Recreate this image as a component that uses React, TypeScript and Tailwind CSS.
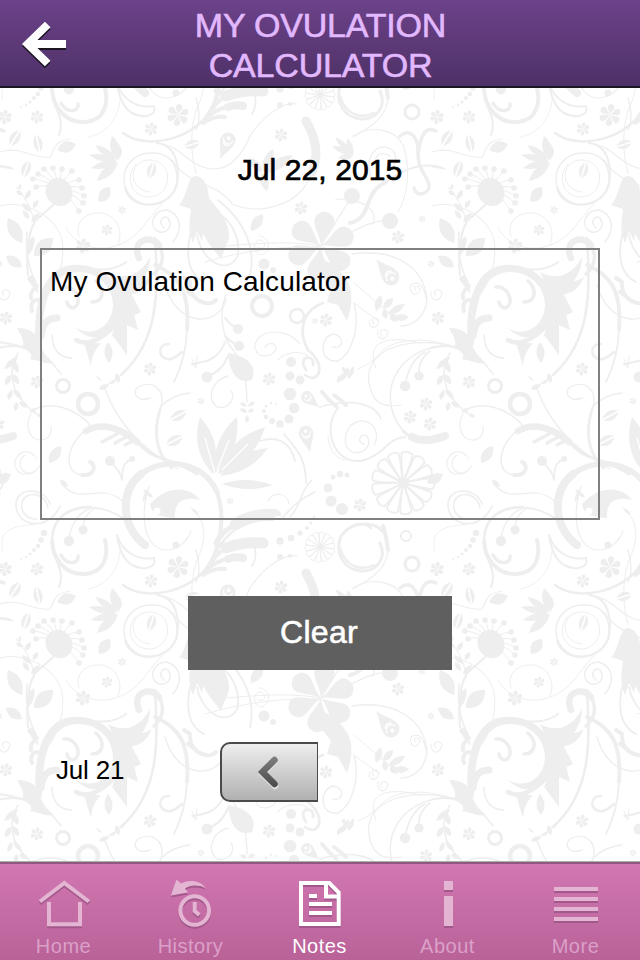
import type { ReactNode } from 'react';

const TILE_W = 432;
const TILE_H = 452;

type Point = [number, number];

// [cx, cy, radius]
const BLOSSOMS: [number, number, number][] = [
    [5, 117, 7], [37, 117, 6.5], [151, 129, 6.5], [178, 115, 11], [281, 135, 6.5],
    [301, 208, 6.5], [107, 230, 5.5], [122, 210, 4], [398, 237, 6.5], [422, 219, 3.5],
    [83, 246, 7.5], [6, 318, 6.5], [37, 382, 6.5], [150, 369, 6.5], [201, 401, 3.5],
    [269, 379, 6.5], [326, 320, 6.5], [315, 321, 3], [426, 404, 6.5], [410, 417, 6.5],
    [430, 424, 6.5], [431, 264, 3.5], [360, 505, 6.5], [230, 501, 3.5],
];

// [cx, cy, radius, stroke width]
const RINGS: [number, number, number, number][] = [
    [412, 112, 7, 3], [406, 536, 5, 2], [262, 306, 10, 4], [297, 316, 7, 2.5],
    [63, 386, 6.5, 3], [88, 404, 10, 4.5],
];

// [x1, y1, x2, y2, width]
const LEAVES: [number, number, number, number, number][] = [
    [57, 150, 76, 144, 11], [99, 202, 110, 187, 11], [8, 218, 22, 243, 13], [34, 256, 53, 238, 14],
    [6, 256, 22, 267, 10], [251, 231, 263, 214, 10], [49, 463, 61, 446, 10], [-5, 483, 11, 474, 10],
    [222, 484, 273, 485, 9], [108, 342, 109, 363, 8],
    // small lotus heads
    [118, 160, 112, 136, 9], [118, 160, 119, 144, 7], [117, 160, 95, 145, 7], [117, 161, 89, 155, 7],
    [117, 162, 91, 168, 7], [118, 162, 97, 181, 9],
    [353, 155, 335, 137, 6], [353, 155, 332, 146, 6], [353, 156, 338, 158, 6], [353, 156, 347, 138, 6],
    // large lotus
    [213, 474, 200, 417, 17], [215, 473, 237, 417, 16], [218, 474, 265, 427, 18], [220, 476, 268, 448, 13],
    // lotus beside the date
    [262, 172, 250, 158, 8], [263, 172, 273, 149, 9], [264, 173, 293, 155, 10], [262, 173, 267, 191, 8],
    // hanging sprigs
    [18, 357, 4, 369, 6], [13, 360, 18, 373, 6], [11, 375, 5, 385, 6], [12, 374, 19, 384, 6],
    [12, 390, 8, 400, 5], [13, 389, 22, 399, 5], [17, 402, 15, 411, 5], [19, 402, 28, 407, 5],
    [31, 412, 37, 408, 4], [37, 414, 43, 417, 4],
    [376, 311, 381, 295, 7], [383, 309, 393, 298, 7], [388, 314, 405, 304, 7], [393, 318, 409, 317, 7],
    [390, 313, 397, 322, 7], [384, 309, 386, 319, 6],
    [337, 383, 343, 374, 5], [342, 381, 349, 367, 5], [348, 379, 354, 366, 5], [346, 372, 342, 367, 4],
    [22, 203, 31, 212, 5], [25, 199, 31, 190, 5], [33, 208, 38, 200, 5], [29, 219, 23, 210, 5],
    [31, 222, 40, 213, 5], [23, 195, 16, 191, 4], [20, 190, 20, 184, 3],
    [240, 403, 247, 406, 4], [248, 406, 255, 402, 4], [240, 409, 247, 412, 4], [248, 412, 254, 409, 4],
    [247, 415, 247, 423, 4],
    // paired twig leaves
    [99, 389, 109, 385, 5], [116, 373, 119, 383, 5], [96, 376, 102, 381, 2], [110, 384, 116, 380, 3],
    [60, 480, 68, 487, 5], [143, 489, 153, 498, 4], [143, 502, 147, 490, 3], [191, 508, 199, 515, 3],
];

// leaves with a light vein: [x1, y1, x2, y2, width]
const SPLIT_LEAVES: [number, number, number, number, number][] = [
    [10, 146, 20, 130, 10], [36, 134, 40, 153, 9], [23, 178, 29, 160, 9], [149, 179, 154, 162, 9],
    [184, 147, 200, 142, 9], [170, 420, 187, 411, 10], [166, 445, 183, 436, 10],
];

const DOTS: [number, number, number][] = [
    // seed trails
    [44, 533, 3.3], [41, 540, 2.8], [38, 546, 2.3], [34, 550, 2], [30, 554, 1.6], [26, 557, 1.2], [21, 559, 0.9],
    [280, 541, 3.7], [291, 538, 3.2], [300, 533, 2.6], [307, 528, 2.1], [311, 523, 1.6], [314, 517, 1.2],
    [290, 394, 6.3], [294, 408, 5.2], [289, 419, 4.6], [280, 424, 3.8], [272, 421, 3], [266, 417, 2.4],
    [264, 411, 2], [266, 406, 1.5], [271, 403, 1.2], [276, 404, 1],
    [328, 488, 4.5], [331, 501, 5.5], [342, 509, 6], [333, 477, 2.5], [340, 474, 3.2], [347, 475, 2.5],
    [352, 196, 8], [390, 221, 8], [176, 545, 3.5],
    // drops at the end of stems
    [69, 541, 5.2], [83, 530, 4.6], [405, 386, 5.2], [419, 376, 4.6], [207, 377, 5.5], [238, 329, 5], [239, 346, 5],
    [110, 461, 5], [132, 459, 3], [291, 362, 5], [290, 376, 4.5], [300, 380, 4.5], [264, 264, 5.5], [273, 270, 3],
    [280, 557, 3], [290, 556, 2],
];

// pin heads fanned around the seed pod
const PINS: Point[] = [
    [36, 187], [38, 174], [44, 169], [53, 168], [62, 169], [72, 171],
    [79, 180], [82, 188], [84, 196], [83, 203], [79, 211], [33, 179],
];

// [path, stroke width]
const STROKES: [string, number][] = [
    // scroll behind the header edge
    ['M105 540C109 556 104 573 85 574C66 575 53 560 52 541', 4],
    ['M52 541C52 518 68 507 90 507', 2.5],
    ['M54 530C58 508 95 498 124 519', 1.8],
    ['M78 556C79 565 66 565 61 555', 3.5],
    ['M69 541C70 525 78 512 92 508M83 530C83 520 87 512 96 508', 1.3],
    ['M52 548C55 562 65 570 59 587', 2],
    ['M117 535C122 552 138 561 154 558C157 566 147 572 132 565C124 560 119 550 117 535', 2],
    ['M120 552C118 572 106 585 89 589', 0.9],
    // wide crescent
    ['M145 545C120 526 120 490 141 474', 8],
    ['M141 474C165 456 204 462 217 492', 5.5],
    ['M217 492C224 512 222 535 214 556', 4],
    ['M149 486C140 515 143 547 165 550C178 550 187 542 191 531', 1.2],
    ['M191 508C205 520 208 535 198 558C190 575 190 605 196 625', 1],
    ['M196 550C200 565 200 575 196 582', 1.4],
    ['M62 484C75 500 88 492 104 493C114 494 120 498 124 503', 1.2],
    // fan of rounded fronds
    ['M123 585C145 602 190 592 208 566C218 545 230 530 250 520', 2.5],
    ['M205 572C213 557 222 547 236 544', 4],
    ['M226 548C238 543 250 542 263 543', 11],
    ['M208 568C218 561 226 558 234 558', 4],
    ['M228 559C234 557 239 557 243 558', 8],
    ['M203 575C212 569 218 568 225 569', 4],
    ['M216 543C222 531 232 525 245 521', 5],
    ['M236 524C247 517 260 514 275 515', 12],
    ['M282 518C290 510 297 500 315 492M290 517C302 505 300 490 312 480', 1.6],
    ['M268 501C274 490 288 493 289 504', 1.2],
    ['M252 538C257 550 256 560 252 566', 1.8],
    ['M297 556C282 553 262 570 250 588C240 612 225 628 200 618C185 612 180 598 157 595', 1.2],
    ['M157 143C176 145 180 165 177 185C168 212 130 210 125 188', 2],
    ['M172 160C190 188 215 180 232 204C260 216 300 205 310 176', 1.3],
    ['M306 121C316 138 319 156 312 172', 9],
    // left waves
    ['M2 552V540C4 528 16 526 45 523', 0.9],
    ['M0 152C20 145 35 160 50 157C55 150 52 142 70 139M0 167L14 169', 1.1],
    ['M16 187C28 200 34 215 34 226M0 206C25 200 55 215 62 240C65 262 58 280 50 292', 1.1],
    ['M59 200L35 221C28 233 26 250 28 275', 2.2],
    // spirals
    ['M177 178C177 160 165 152 151 153C134 153 123 166 124 181C126 197 139 206 153 204C168 202 177 192 177 178', 1.5],
    ['M136 164C124 178 132 197 149 197C164 197 172 181 165 168C159 159 145 157 137 165C128 177 136 191 150 192', 1],
    ['M79 236C74 218 90 212 101 213C116 215 124 230 118 244M162 204C145 220 140 240 112 247C95 251 75 245 66 228', 1],
    ['M164 228C158 223 162 214 168 218C174 228 165 235 157 231C148 224 154 210 167 210C184 216 181 232 173 242', 1.5],
    ['M50 504C45 487 16 486 16 505C17 529 50 530 60 506M48 508C46 492 25 490 22 503C20 516 32 520 37 519', 1.6],
    ['M37 459C30 446 13 452 15 466C17 477 35 477 39 466M35 471C25 479 13 464 25 455', 1.1],
    // wreath and curls right of the date
    ['M382 531C375 522 352 520 341 536C334 553 344 569 360 571C377 572 387 558 380 543', 3],
    ['M345 532C354 522 364 522 371 528M340 548C346 568 362 571 374 565', 2.5],
    ['M383 526C385 532 387 540 388 550', 4],
    ['M388 550C387 568 371 580 353 588', 1.2],
    ['M353 137C370 124 395 129 403 145C411 168 408 195 398 212', 1.1],
    ['M400 136C410 127 419 138 418 154C420 139 424 125 436 131', 3.5],
    ['M414 188C416 198 430 194 429 185C427 175 418 170 418 154', 3.5],
    ['M350 223C373 218 362 193 386 182', 4],
    ['M386 182C405 168 425 162 443 168', 2],
    ['M321 246L352 196M321 246C350 235 370 218 390 221M335 200C350 196 380 205 373 224', 1.2],
    ['M371 176C365 158 374 146 386 147C402 152 395 170 388 170M378 169C370 158 380 149 390 156', 1.3],
    // long tail under the bird
    ['M218 200C246 222 256 250 250 275M190 235C185 260 190 275 204 282M197 235C203 265 230 275 238 255C240 235 230 220 217 212', 1.8],
    ['M321 246C285 240 255 244 225 246M321 248C290 245 245 250 205 262', 1],
    ['M257 247C264 252 268 243 261 240C252 240 253 253 261 255C274 251 268 235 259 236', 1],
    // acanthus scroll
    ['M27 232C25 255 29 268 37 286', 1.6],
    ['M53 279C72 259 105 279 126 262', 2],
    ['M67 302C69 311 79 309 78 299C77 291 70 286 64 287M92 302C103 302 106 290 96 281', 3.6],
    ['M76 340C89 348 105 336 115 325', 4.5],
    ['M41 336C43 322 48 318 57 318', 7],
    ['M52 335C52 350 60 358 72 358M48 358L61 374', 1.5],
    ['M0 347C18 344 30 349 40 351', 1.6],
    ['M37 286C32 290 30 294 31 298M38 300C32 300 30 305 32 311', 4],
    ['M155 238C158 290 160 340 121 375', 2.6],
    ['M121 375L107 385', 1],
    ['M155 265C178 275 190 290 187 330', 3.8],
    ['M187 330C186 355 180 370 174 382', 1.8],
    ['M139 258C131 240 151 234 159 245', 6.5],
    ['M159 245C166 257 161 268 154 274', 3.5],
    ['M169 344C157 343 157 361 171 359C176 357 180 354 182 352', 2.5],
    ['M165 285C177 328 218 327 226 300', 1.3],
    ['M190 285C190 300 208 308 216 300M188 292L196 298M190 282L184 278', 4],
    ['M226 295C219 312 222 330 228 343C238 358 246 360 247 402', 1.4],
    ['M225 318C230 324 234 327 238 329M225 336C230 341 234 344 239 346M225 342C218 360 206 362 192 364M228 356C222 370 214 374 207 377', 2],
    ['M192 359L195 367M197 356L196 368', 1],
    ['M228 376C212 380 206 398 217 407C230 410 236 397 231 391', 1.3],
    // lower left vine
    ['M18 353C8 368 8 395 38 415M30 412C50 399 76 408 92 427', 1.5],
    ['M31 414C24 426 30 441 42 440C53 438 52 427 50 426', 1.3],
    ['M105 389C115 415 133 445 178 469', 1.4],
    ['M86 431C101 422 120 427 137 442', 6.5],
    ['M102 442L117 434M115 443L126 437M125 445L133 441', 3.5],
    ['M137 441C154 463 175 458 197 474', 3.2],
    ['M87 429C64 447 64 474 82 475', 1.4],
    ['M82 475C96 476 96 464 90 462', 4],
    ['M150 398C138 403 131 393 138 387C153 379 167 390 160 410M160 407C170 397 180 394 190 393', 1.4],
    ['M160 410C152 435 158 456 172 468', 2.8],
    ['M110 461C116 468 120 470 122 480M132 459C124 462 122 468 122 480', 1.8],
    // center curls
    ['M255 349C253 330 285 325 300 344M256 350C258 359 274 357 276 349C276 341 266 343 265 348', 1.2],
    ['M323 303C303 310 297 330 308 350C328 366 318 385 305 375M306 370C296 354 316 355 313 365', 2.8],
    ['M278 360C285 352 300 350 308 356', 1.2],
    ['M260 441C275 436 290 440 295 461M284 434C298 450 306 460 306 483', 1.8],
    // loops right of center
    ['M352 254C390 248 424 264 427 300C425 318 412 326 401 326', 1.4],
    ['M416 290C411 286 418 284 420 289C418 298 408 294 411 285C421 278 425 292 426 298M436 296C431 290 440 287 442 293C440 304 430 301 431 292', 1.1],
    ['M354 283L388 312M354 303L377 320', 1],
    ['M374 324C369 319 376 315 379 321C377 332 366 326 370 320M382 336C377 330 386 327 388 333C385 343 376 339 378 330', 1.1],
    ['M354 303C361 330 350 355 338 361C320 364 318 338 333 334C346 336 343 350 333 347', 1.4],
    ['M358 369C390 355 374 342 420 340C435 341 445 344 460 348M376 368C364 340 390 335 420 343', 1],
    ['M462 350C420 333 358 345 370 388C374 402 382 408 401 405', 1.2],
    ['M462 348C405 336 370 390 403 431', 1.5],
    ['M403 431C415 443 430 440 445 437', 3],
    ['M412 437C424 443 435 439 445 436', 8],
    ['M405 386C407 370 415 357 425 352M419 376C418 366 422 357 430 351', 1.6],
    ['M322 392C326 397 330 402 336 406M334 395C338 398 342 401 346 405', 4],
    ['M320 407C350 398 375 403 381 419', 1.7],
    ['M338 408C322 428 333 463 360 461C385 456 386 438 405 437', 2],
    ['M364 444C356 443 360 432 367 436C373 447 362 455 352 452C340 445 345 425 359 421C375 420 380 435 374 445', 1.3],
    ['M328 436C328 445 333 458 345 460', 1],
];

const leafPath = (x1: number, y1: number, x2: number, y2: number, w: number) => {
    const len = Math.hypot(x2 - x1, y2 - y1) || 1;
    const nx = (-(y2 - y1) / len) * w;
    const ny = ((x2 - x1) / len) * w;
    const mx = (x1 + x2) / 2;
    const my = (y1 + y2) / 2;
    return `M${x1} ${y1}Q${mx + nx} ${my + ny} ${x2} ${y2}Q${mx - nx} ${my - ny} ${x1} ${y1}Z`;
};

const Petals = ({ cx, cy, r, count, outline = false }: { cx: number; cy: number; r: number; count: number; outline?: boolean }) => (
    <g
        transform={`translate(${cx} ${cy})`}
        fill={outline ? 'none' : '#eeeeee'}
        stroke={outline ? '#eeeeee' : 'none'}
        strokeWidth={r * 0.06}
    >
        {Array.from({ length: count }, (_, i) => (
            <path
                key={i}
                d={`M0 0C${r * 0.08} ${-r * 0.4} ${r * (outline ? 0.18 : 0.5)} ${-r * 0.7} ${r * 0.18} ${-r * 0.95}Q0 ${-r * 1.08} ${-r * 0.18} ${-r * 0.95}C${-r * (outline ? 0.18 : 0.5)} ${-r * 0.7} ${-r * 0.08} ${-r * 0.4} 0 0Z`}
                transform={`rotate(${(360 / count) * i + 8})`}
            />
        ))}
    </g>
);

const EyeDrop = ({ x, y, angle, size }: { x: number; y: number; angle: number; size: number }) => (
    <g transform={`translate(${x} ${y}) rotate(${angle}) scale(${size})`}>
        <path d="M0 22C-3 12 -8 7 -8 0A8 8 0 0 1 8 0C8 7 3 12 0 22Z" fill="#eeeeee" />
        <path d="M-5 -1A5 5 0 0 0 5 -1M-4 4Q0 8 4 4" fill="none" stroke="#ffffff" strokeWidth="1.3" />
        <circle cy="-2" r="2" fill="#ffffff" />
    </g>
);

const FloralTile = () => (
    <g id="floral" fill="#eeeeee">
        <g fill="none" stroke="#eeeeee" strokeLinecap="round" strokeLinejoin="round">
            {STROKES.map(([d, w]) => <path key={d} d={d} strokeWidth={w} />)}
            {RINGS.map(([cx, cy, r, w]) => <circle key={`${cx}-${cy}`} cx={cx} cy={cy} r={r} strokeWidth={w} />)}
            {PINS.map(([x, y]) => <path key={`${x}-${y}`} d={`M59 190Q${(59 + x) / 2} ${(190 + y) / 2 - 5} ${x} ${y}`} strokeWidth="1" />)}
        </g>
        {PINS.map(([x, y]) => <circle key={`${x}-${y}`} cx={x} cy={y} r="2.8" />)}
        <ellipse cx="59" cy="192" rx="13" ry="14.5" transform="rotate(-35 59 192)" />

        {BLOSSOMS.map(([cx, cy, r]) => <Petals key={`${cx}-${cy}`} cx={cx} cy={cy} r={r} count={6} />)}
        {DOTS.map(([cx, cy, r]) => <circle key={`${cx}-${cy}`} cx={cx} cy={cy} r={r} />)}
        {LEAVES.map((l) => <path key={l.join()} d={leafPath(...l)} />)}
        {SPLIT_LEAVES.map((l) => (
            <g key={l.join()}>
                <path d={leafPath(...l)} />
                <path d={`M${l[0]} ${l[1]}L${l[2]} ${l[3]}`} stroke="#ffffff" strokeWidth="1.6" />
            </g>
        ))}
        <path d="M214 470L205 438M217 470L229 440M222 470L248 444" stroke="#ffffff" strokeWidth="1.3" />

        {/* big six-petal bloom with pointed sepals */}
        <Petals cx={321} cy={246} r={34} count={6} />
        <path d="M310 262C320 256 336 262 348 282C354 295 351 309 347 321L338 305L327 302L331 289Z" />
        <Petals cx={320} cy={547} r={15} count={14} outline />
        <Petals cx={403} cy={483} r={31} count={13} outline />

        {/* bird */}
        <path d="M195 176C205 176 208 188 209 198C221 212 230 224 229 238L221 259C214 250 208 243 203 234L202 241L197 231L193 243C187 230 190 218 191 209L179 205C186 200 187 178 195 176Z" />
        {/* fish head inside the crescent */}
        <path d="M150 504C165 487 187 484 200 500C184 496 174 501 175 518C163 517 151 516 150 504Z" />
        <circle cx="157" cy="511" r="3.5" fill="#ffffff" />
        <circle cx="278" cy="520" r="4.2" fill="#ffffff" />

        {/* acanthus: crescent body, flame leaves, base */}
        <path d="M36 345C32 306 43 267 72 265C98 263 120 279 122 306C123 331 96 350 75 327C88 337 111 331 113 306C113 286 97 271 76 272C52 274 42 298 42 345Z" />
        <path d="M108 272C124 281 140 276 150 257C150 274 139 287 130 291L141 312L132 306L138 330L127 325L127 355L112 335C119 321 119 292 108 272Z" />
        <path d="M120 282C134 280 142 284 152 277C147 289 138 296 126 294ZM126 302L141 312L128 318ZM84 343H101C95 350 92 355 91 366Z" />
        <path d="M17 328C29 328 36 332 39 341C42 351 46 357 54 363C46 365 38 360 30 359C34 354 28 350 21 348C26 344 22 337 17 328Z" />
        <path d="M27 279C31 270 39 280 38 294ZM28 252Q22 244 34 236Q37 245 28 256Z" />
        <path d="M228 353C246 356 258 365 252 380C239 384 230 376 228 353Z" />

        <EyeDrop x={228} y={140} angle={22} size={0.95} />
        <EyeDrop x={391} y={277} angle={140} size={1.05} />
        <EyeDrop x={306} y={433} angle={-12} size={0.9} />
        <EyeDrop x={307} y={397} angle={-50} size={0.75} />
    </g>
);

const FloralBackground = () => (
    <svg className="absolute inset-0 h-[960px] w-[640px]" viewBox="0 0 640 960" aria-hidden="true">
        <defs>
            <FloralTile />
        </defs>
        {[-1, 0, 1].map((row) =>
            [-1, 0, 1].map((col) => <use key={`${row}${col}`} href="#floral" x={col * TILE_W} y={row * TILE_H} />),
        )}
    </svg>
);

const HomeIcon = () => (
    <path d="M40 901.5L64.3 883L88.8 901.5M49 902V924.2H80V902" />
);

const HistoryIcon = () => (
    <>
        <circle cx="66.7" cy="910.5" r="14.3" />
        <path d="M66.7 902V911L71.3 915" />
        <path d="M43 895.5L48.5 879.5L53 883.5C61 879 73 880.5 77.5 888C70 884.5 62 885 57 888.5L60 892.5Z" fill="currentColor" stroke="none" />
    </>
);

const NotesIcon = () => (
    <>
        <path d="M45 883H73.3L82.7 892.5V924H45Z" />
        <path d="M70 883V896.5H82.7M53 896H61M53 904H76M53 913H76" />
    </>
);

const AboutIcon = () => (
    <path d="M60 881H69V890H60ZM60 896H69V926H60Z" fill="currentColor" stroke="none" />
);

const MoreIcon = () => (
    <path d="M42 889H86M42 899H86M42 909H86M42 919H86" />
);

const TABS: { label: string; icon: ReactNode; active?: boolean }[] = [
    { label: 'Home', icon: <HomeIcon /> },
    { label: 'History', icon: <HistoryIcon /> },
    { label: 'Notes', icon: <NotesIcon />, active: true },
    { label: 'About', icon: <AboutIcon /> },
    { label: 'More', icon: <MoreIcon /> },
];

const TabBar = () => (
    <nav className="grid h-[98px] shrink-0 grid-cols-5 border-t-2 border-[#92577f] bg-gradient-to-b from-[#d177b2] to-[#b96298] shadow-[0_-1px_0_#a9b5ab]">
        {TABS.map(({ label, icon, active }) => (
            <button key={label} className="flex flex-col items-center">
                <svg className="h-[70px] w-32 shrink-0" viewBox="0 864 128 70" fill="none" strokeWidth="4">
                    <g transform="translate(0 2)" stroke="#a2588a" className="text-[#a2588a]">{icon}</g>
                    <g
                        stroke={active ? '#ffffff' : '#e4b5d3'}
                        className={active ? 'text-white' : 'text-[#e4b5d3]'}
                    >
                        {icon}
                    </g>
                </svg>
                <span
                    className={`text-[20px] leading-6 tracking-[0.5px] ${active ? 'text-white' : 'text-[#dba0c8]'} ${label === 'History' ? '-ml-[3px]' : '-ml-px'}`}
                >
                    {label}
                </span>
            </button>
        ))}
    </nav>
);

const Header = () => (
    <header className="flex h-[88px] shrink-0 items-center border-b-2 border-[#1c1522] bg-gradient-to-b from-[#6c428a] to-[#4e3166]">
        <button className="w-[120px]" aria-label="Back">
            <svg className="h-[86px] w-[120px]" viewBox="0 0 120 86" fill="none" strokeWidth="8">
                <path d="M47.7 26.5L27.7 46L47.7 65.5M31 46H66" stroke="#1b1522" />
                <path d="M47.7 24.5L27.7 44L47.7 63.5M31 44H66" stroke="#ffffff" />
            </svg>
        </button>
        <h1 className="w-[401px] pt-[4px] text-center text-[34px] leading-10 tracking-[-0.2px] text-[#e2b8ff] [-webkit-text-stroke:0.6px_#e2b8ff]">
            MY OVULATION
            <br />
            CALCULATOR
        </h1>
    </header>
);

export default function App() {
    return (
        <div className="relative h-[960px] w-[640px] overflow-hidden bg-white font-['Liberation_Sans',Arial,sans-serif] text-black">
            <FloralBackground />
            <div className="relative flex h-full flex-col">
                <Header />
                <main className="flex grow flex-col">
                    <h2 className="mt-16 text-center text-[30px] leading-9 tracking-[0.1px] [-webkit-text-stroke:0.7px_#000]">
                        Jul 22, 2015
                    </h2>
                    <div className="mx-10 mt-[60px] h-[272px] border-2 border-[#808080] px-2 pt-[14px] text-[28px] leading-9 tracking-[0.12px]">
                        My Ovulation Calculator
                    </div>
                    <button className="mx-auto mt-[76px] h-[74px] w-[264px] bg-[#5f5f5f] pr-[2px] pb-[2px] text-[32px] tracking-[0.3px] text-white [-webkit-text-stroke:0.6px_#fff]">
                        Clear
                    </button>
                    <div className="mt-[72px] flex h-[60px] items-center">
                        <span className="w-[220px] pb-[5px] pl-[56px] text-[26px] leading-8 tracking-[-0.2px]">Jul 21</span>
                        <button
                            className="h-[60px] w-[98px] rounded-l-[10px] border-2 border-r border-[#4b4b4b] bg-gradient-to-b from-[#eeeeee] to-[#b1b1b1]"
                            aria-label="Previous day"
                        >
                            <svg className="h-14 w-[95px]" viewBox="222 744 95 56" fill="none" strokeWidth="6.5" strokeLinecap="round">
                                <defs>
                                    <linearGradient id="chevron" x1="0" y1="756" x2="0" y2="788" gradientUnits="userSpaceOnUse">
                                        <stop stopColor="#808080" />
                                        <stop offset="1" stopColor="#484848" />
                                    </linearGradient>
                                </defs>
                                <path d="M275 761L262.7 773.5L275 786" stroke="#e2e2e2" />
                                <path d="M274.5 760L262.5 772L274.5 784" stroke="url(#chevron)" />
                            </svg>
                        </button>
                    </div>
                </main>
                <TabBar />
            </div>
        </div>
    );
}
